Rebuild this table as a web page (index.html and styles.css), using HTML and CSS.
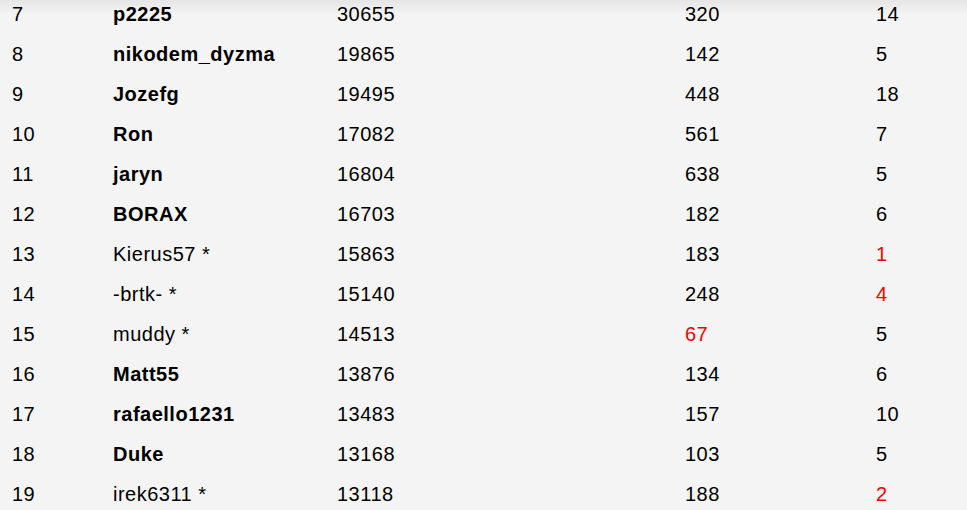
FILE: index.html
```html
<!DOCTYPE html>
<html lang="pl">
<head>
<meta charset="utf-8">
<title>Ranking</title>
<link rel="stylesheet" href="styles.css">
</head>
<body>
<div class="shade"></div>
<table class="rank">
  <colgroup>
    <col class="c1"><col class="c2"><col class="c3"><col class="c4"><col class="c5">
  </colgroup>
  <tbody>
    <tr><td>7</td><td class="b">p2225</td><td>30655</td><td>320</td><td>14</td></tr>
    <tr><td>8</td><td class="b">nikodem_dyzma</td><td>19865</td><td>142</td><td>5</td></tr>
    <tr><td>9</td><td class="b">Jozefg</td><td>19495</td><td>448</td><td>18</td></tr>
    <tr><td>10</td><td class="b">Ron</td><td>17082</td><td>561</td><td>7</td></tr>
    <tr><td>11</td><td class="b">jaryn</td><td>16804</td><td>638</td><td>5</td></tr>
    <tr><td>12</td><td class="b">BORAX</td><td>16703</td><td>182</td><td>6</td></tr>
    <tr><td>13</td><td>Kierus57 *</td><td>15863</td><td>183</td><td class="r">1</td></tr>
    <tr><td>14</td><td>-brtk- *</td><td>15140</td><td>248</td><td class="r">4</td></tr>
    <tr><td>15</td><td>muddy *</td><td>14513</td><td class="r">67</td><td>5</td></tr>
    <tr><td>16</td><td class="b">Matt55</td><td>13876</td><td>134</td><td>6</td></tr>
    <tr><td>17</td><td class="b">rafaello1231</td><td>13483</td><td>157</td><td>10</td></tr>
    <tr><td>18</td><td class="b">Duke</td><td>13168</td><td>103</td><td>5</td></tr>
    <tr><td>19</td><td>irek6311 *</td><td>13118</td><td>188</td><td class="r">2</td></tr>
  </tbody>
</table>
</body>
</html>
```

FILE: styles.css
```css
html, body {
  margin: 0;
  padding: 0;
  background: #f4f4f4;
  overflow: hidden;
}
body {
  font-family: "Liberation Sans", Arial, sans-serif;
  font-size: 20px;
  letter-spacing: 0.5px;
  color: #000;
}
.shade {
  position: fixed;
  top: 0;
  left: 0;
  right: 0;
  height: 14px;
  background: linear-gradient(to bottom, rgba(0,0,0,0.06), rgba(0,0,0,0));
  pointer-events: none;
}
.rank {
  border-collapse: collapse;
  width: 967px;
  table-layout: fixed;
  margin-top: -6px;
}
.c1 { width: 101px; }
.c2 { width: 224px; }
.c3 { width: 348px; }
.c4 { width: 191px; }
.c5 { width: 103px; }
.rank td {
  height: 40px;
  padding: 0 0 0 12px;
  box-sizing: border-box;
  vertical-align: middle;
  white-space: nowrap;
}
.rank td.b { font-weight: bold; }
.rank td.r { color: #ff0000; }
```
